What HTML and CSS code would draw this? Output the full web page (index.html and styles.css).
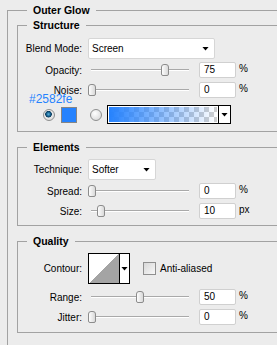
FILE: index.html
```html
<!DOCTYPE html>
<html lang="en">
<head>
  <meta charset="UTF-8">
  <title>Outer Glow</title>
  <link rel="stylesheet" href="styles.css">
</head>
<body>

<fieldset class="group group-main">
  <legend>Outer Glow</legend>

  <fieldset class="group section section-structure">
    <legend>Structure</legend>
    <div class="row row-select">
      <span class="label">Blend Mode:</span>
      <div class="dropdown dropdown-wide"><span>Screen</span><i class="caret"></i></div>
    </div>
    <div class="row row-slider">
      <span class="label">Opacity:</span>
      <div class="slider"><div class="track"></div><div class="thumb" style="left: 73px"></div></div>
      <div class="field">75</div><span class="unit">%</span>
    </div>
    <div class="row row-slider row-gap">
      <span class="label">Noise:</span>
      <div class="slider"><div class="track"></div><div class="thumb" style="left: 0px"></div></div>
      <div class="field">0</div><span class="unit">%</span>
    </div>
    <div class="row row-color">
      <span class="hex">#2582fe</span>
      <span class="radio checked"></span>
      <span class="swatch"></span>
      <span class="radio radio-second"></span>
      <div class="gradient-pick">
        <div class="gradient"></div>
        <div class="drop"><i class="caret"></i></div>
      </div>
    </div>
  </fieldset>

  <fieldset class="group section section-elements">
    <legend>Elements</legend>
    <div class="row row-select">
      <span class="label">Technique:</span>
      <div class="dropdown dropdown-short"><span>Softer</span><i class="caret"></i></div>
    </div>
    <div class="row row-slider">
      <span class="label">Spread:</span>
      <div class="slider"><div class="track"></div><div class="thumb" style="left: 0px"></div></div>
      <div class="field">0</div><span class="unit">%</span>
    </div>
    <div class="row row-slider row-gap">
      <span class="label">Size:</span>
      <div class="slider"><div class="track"></div><div class="thumb" style="left: 9px"></div></div>
      <div class="field">10</div><span class="unit">px</span>
    </div>
  </fieldset>

  <fieldset class="group section section-quality">
    <legend>Quality</legend>
    <div class="row row-contour">
      <span class="label">Contour:</span>
      <div class="contour">
        <div class="contour-preview"></div>
        <div class="contour-drop"><i class="caret"></i></div>
      </div>
      <span class="checkbox"></span>
      <span class="check-text">Anti-aliased</span>
    </div>
    <div class="row row-slider row-range">
      <span class="label">Range:</span>
      <div class="slider"><div class="track"></div><div class="thumb" style="left: 48px"></div></div>
      <div class="field">50</div><span class="unit">%</span>
    </div>
    <div class="row row-slider row-gap">
      <span class="label">Jitter:</span>
      <div class="slider"><div class="track"></div><div class="thumb" style="left: 0px"></div></div>
      <div class="field">0</div><span class="unit">%</span>
    </div>
  </fieldset>
</fieldset>

</body>
</html>
```

FILE: styles.css
```css
html, body {
  margin: 0;
  overflow: hidden;
}

body {
  width: 277px;
  height: 345px;
  background-color: #ececec;
  color: #000;
  font-family: 'Liberation Sans', Arial, sans-serif;
  font-size: 10px;
}

.group {
  border: 1px solid #a2a2a2;
  margin: 0;
  min-width: 0;
}

.group legend {
  font-size: 10.5px;
  font-weight: bold;
  line-height: 13px;
  padding: 0 6px;
  margin-left: 9px;
}

.group-main {
  width: 320px;
  margin: 4px 0 0 7px;
  padding: 2px 0 40px 9px;
  box-sizing: border-box;
}

.group-main > legend {
  margin-left: 10px;
}

.section {
  padding: 6px 0 7px 0;
}

.section-elements,
.section-quality {
  margin-top: 9px;
  padding-top: 5px;
  padding-bottom: 6px;
}

.section-quality {
  padding-bottom: 7px;
}

.row {
  display: flex;
  align-items: center;
}

.label {
  flex: none;
  width: 64px;
  margin-right: 6px;
  text-align: right;
  line-height: 9px;
}

/* dropdowns */
.row-select {
  height: 21px;
}

.dropdown {
  height: 21px;
  box-sizing: border-box;
  border: 1px solid #d6d6d6;
  border-radius: 2px;
  background-color: #fff;
  padding: 0 5px 0 3px;
  display: flex;
  align-items: center;
  justify-content: space-between;
}

.dropdown-wide {
  width: 127px;
}

.dropdown-short {
  width: 68px;
}

.caret {
  display: block;
  width: 7px;
  height: 4px;
  background-color: #000;
  clip-path: polygon(0 0, 100% 0, 50% 100%);
}

/* sliders */
.row-slider {
  height: 16px;
  margin-top: 3px;
}

.row-gap {
  margin-top: 4px;
}

.row-range {
  margin-top: 5px;
}

.slider {
  position: relative;
  flex: none;
  width: 104px;
  height: 16px;
  margin-right: 7px;
}

.track {
  position: absolute;
  left: 3px;
  top: 7px;
  width: 98px;
  height: 1px;
  background-color: #a9a9a9;
  border-bottom: 1px solid #fff;
}

.thumb {
  position: absolute;
  top: 2px;
  width: 6px;
  height: 10px;
  border: 1px solid #8c8c8c;
  border-radius: 3px 3px 2px 2px;
  background: linear-gradient(to right, #fdfdfd, #d9d9d9);
}

.field {
  width: 37px;
  height: 16px;
  box-sizing: border-box;
  border: 1px solid #d0d0d0;
  border-radius: 2px;
  background-color: #fff;
  padding-left: 4px;
  line-height: 14px;
}

.unit {
  margin-left: 3px;
  margin-top: -3px;
}

/* colour row */
.row-color {
  position: relative;
  height: 19px;
  margin-top: 7px;
  padding-left: 25px;
}

.hex {
  position: absolute;
  left: 11px;
  top: -11px;
  font-size: 12px;
  line-height: 11px;
  color: #2582fe;
}

.radio {
  width: 12px;
  height: 12px;
  box-sizing: border-box;
  border: 1px solid #8e8f8f;
  border-radius: 50%;
  background: radial-gradient(circle at 40% 35%, #fff, #d2d2d2);
}

.radio.checked {
  background: radial-gradient(circle at 45% 42%, #5fb4df 0, #17628f 2px, #0b3a5c 3px, transparent 3.6px),
    radial-gradient(circle at 40% 35%, #fff, #d2d2d2);
}

.swatch {
  width: 16px;
  height: 16px;
  box-sizing: border-box;
  margin-left: 6px;
  border: 1px solid #858585;
  background-color: #2582fe;
}

.radio-second {
  margin-left: 13px;
}

.gradient-pick {
  display: flex;
  width: 124px;
  height: 19px;
  box-sizing: border-box;
  margin-left: 5px;
  border: 1px solid #000;
  background-color: #fff;
}

.gradient {
  flex: 1;
  margin: 1px;
  background-image: linear-gradient(to right, #2582fe, rgba(37, 130, 254, 0)),
    conic-gradient(#cfcfcf 25%, #fff 0 50%, #cfcfcf 0 75%, #fff 0);
  background-size: 100% 100%, 10px 10px;
}

.drop {
  width: 11px;
  border-left: 1px solid #000;
  display: flex;
  align-items: center;
  justify-content: center;
}

/* contour */
.row-contour {
  height: 31px;
}

.contour {
  display: flex;
  width: 42px;
  height: 31px;
  box-sizing: border-box;
  border: 1px solid #000;
  background-color: #fff;
}

.contour-preview {
  width: 30px;
  background: linear-gradient(to top left, #a4a4a4 50%, #fff 50%);
}

.contour-drop {
  flex: 1;
  border-left: 1px solid #000;
  display: flex;
  align-items: center;
  justify-content: center;
}

.checkbox {
  width: 13px;
  height: 13px;
  box-sizing: border-box;
  margin-left: 13px;
  border: 1px solid #8f8f8f;
  background: linear-gradient(135deg, #d8d8d8, #f8f8f8);
}

.check-text {
  margin-left: 4px;
}
```
